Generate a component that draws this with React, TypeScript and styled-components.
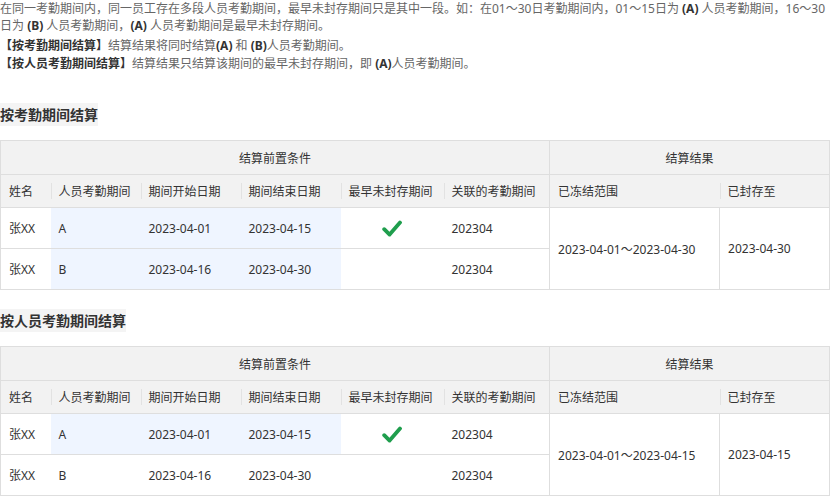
import styled, { createGlobalStyle } from 'styled-components';

const GlobalStyle = createGlobalStyle`
  html, body {
    margin: 0;
    padding: 0;
    overflow: hidden;
    background: #fff;
  }
  body {
    font-family: "Noto Sans", "Noto Sans CJK SC", sans-serif;
    color: #333;
  }
`;

interface Row {
  name: string;
  period: string;
  start: string;
  end: string;
  earliest: boolean;
  linked: string;
  tinted: boolean;
}

interface Section {
  title: string;
  rows: Row[];
  frozen: string;
  sealed: string;
}

const sections: Section[] = [
  {
    title: '按考勤期间结算',
    rows: [
      { name: '张XX', period: 'A', start: '2023-04-01', end: '2023-04-15', earliest: true, linked: '202304', tinted: true },
      { name: '张XX', period: 'B', start: '2023-04-16', end: '2023-04-30', earliest: false, linked: '202304', tinted: true },
    ],
    frozen: '2023-04-01～2023-04-30',
    sealed: '2023-04-30',
  },
  {
    title: '按人员考勤期间结算',
    rows: [
      { name: '张XX', period: 'A', start: '2023-04-01', end: '2023-04-15', earliest: true, linked: '202304', tinted: true },
      { name: '张XX', period: 'B', start: '2023-04-16', end: '2023-04-30', earliest: false, linked: '202304', tinted: false },
    ],
    frozen: '2023-04-01～2023-04-15',
    sealed: '2023-04-15',
  },
];

const colWidths = [50, 90, 100, 100, 103, 106, 170, 110];

const CheckIcon = () => (
  <svg width="20" height="17" viewBox="0 0 20 17">
    <path d="M2.2 9.2 L7.6 14.6 L18 2.6" fill="none" stroke="#1f9e4d" strokeWidth="3.8" strokeLinecap="round" strokeLinejoin="round" />
  </svg>
);

const SettlementTable = ({ section }: { section: Section }) => (
  <Block>
    <Heading>{section.title}</Heading>
    <Table>
      <colgroup>
        {colWidths.map((w, i) => (
          <col key={i} style={{ width: w }} />
        ))}
      </colgroup>
      <thead>
        <tr>
          <GroupCell colSpan={6}>结算前置条件</GroupCell>
          <GroupCell colSpan={2}>结算结果</GroupCell>
        </tr>
        <tr>
          <ColHead>姓名</ColHead>
          <ColHead sep>人员考勤期间</ColHead>
          <ColHead sep>期间开始日期</ColHead>
          <ColHead sep>期间结束日期</ColHead>
          <ColHead sep>最早未封存期间</ColHead>
          <ColHead sep>关联的考勤期间</ColHead>
          <ColHead edge>已冻结范围</ColHead>
          <ColHead sep>已封存至</ColHead>
        </tr>
      </thead>
      <tbody>
        {section.rows.map((r, i) => (
          <tr key={i}>
            <Cell>{r.name}</Cell>
            <Cell tinted={r.tinted}>{r.period}</Cell>
            <Cell tinted={r.tinted}>{r.start}</Cell>
            <Cell tinted={r.tinted}>{r.end}</Cell>
            <CheckCell>{r.earliest && <CheckIcon />}</CheckCell>
            <Cell>{r.linked}</Cell>
            {i === 0 && (
              <>
                <Cell edge rowSpan={section.rows.length}>{section.frozen}</Cell>
                <Cell edge rowSpan={section.rows.length}>{section.sealed}</Cell>
              </>
            )}
          </tr>
        ))}
      </tbody>
    </Table>
  </Block>
);

const App = () => (
  <>
    <GlobalStyle />
    <Page>
      <Intro>
        <Para>
          在同一考勤期间内，同一员工存在多段人员考勤期间，最早未封存期间只是其中一段。如：在01～30日考勤期间内，01～15日为 <Strong>(A)</Strong> 人员考勤期间，16～30日为 <Strong>(B)</Strong> 人员考勤期间，<Strong>(A)</Strong> 人员考勤期间是最早未封存期间。
        </Para>
        <Notes>
          <Note>
            <Strong>【按考勤期间结算】</Strong>结算结果将同时结算<Strong>(A)</Strong> 和 <Strong>(B)</Strong>人员考勤期间。
          </Note>
          <Note>
            <Strong>【按人员考勤期间结算】</Strong>结算结果只结算该期间的最早未封存期间，即 <Strong>(A)</Strong>人员考勤期间。
          </Note>
        </Notes>
      </Intro>
      {sections.map((s) => (
        <SettlementTable key={s.title} section={s} />
      ))}
    </Page>
  </>
);

export default App;

const Page = styled.div`
  display: flex;
  flex-direction: column;
  width: 830px;
`;

const Intro = styled.div`
  font-size: 12px;
  color: #666;
  margin-bottom: 11px;
`;

const Para = styled.p`
  margin: 0;
  line-height: 17px;
`;

const Notes = styled.div`
  margin-top: 3px;
`;

const Note = styled.div`
  line-height: 18px;
`;

const Strong = styled.b`
  font-weight: 700;
  color: #333;
`;

const Block = styled.section`
  display: flex;
  flex-direction: column;
  align-items: flex-start;
  margin-top: 19px;
`;

const Heading = styled.h3`
  margin: 0 0 14px;
  height: 23px;
  line-height: 23px;
  font-size: 14px;
  font-weight: 600;
  color: #333;
  background: #f4f4f4;
`;

const Table = styled.table`
  width: 830px;
  table-layout: fixed;
  border-collapse: collapse;
  font-size: 12px;
  color: #333;
`;

const GroupCell = styled.th`
  height: 33px;
  padding: 0;
  font-weight: 400;
  text-align: center;
  background: #f2f2f2;
  border: 1px solid #dedede;
`;

const ColHead = styled.th<{ sep?: boolean; edge?: boolean }>`
  position: relative;
  height: 32px;
  padding: 0 8px;
  font-weight: 400;
  text-align: left;
  white-space: nowrap;
  background: #f2f2f2;
  border-top: 1px solid #dedede;
  border-bottom: 1px solid #dedede;
  border-left: ${(p) => (p.edge ? '1px solid #dedede' : 'none')};
  border-right: none;

  &:first-child {
    border-left: 1px solid #dedede;
  }

  &:last-child {
    border-right: 1px solid #dedede;
  }

  &::before {
    content: '';
    display: ${(p) => (p.sep ? 'block' : 'none')};
    position: absolute;
    left: 0;
    top: 50%;
    width: 1px;
    height: 16px;
    margin-top: -8px;
    background: #e2e2e2;
  }
`;

const Cell = styled.td<{ tinted?: boolean; edge?: boolean }>`
  height: 40px;
  padding: 0 8px;
  white-space: nowrap;
  background: ${(p) => (p.tinted ? '#eff5ff' : '#fff')};
  border-top: 1px solid #dedede;
  border-bottom: 1px solid #dedede;
  border-left: ${(p) => (p.edge ? '1px solid #dedede' : 'none')};
  border-right: ${(p) => (p.edge ? '1px solid #dedede' : 'none')};

  &:first-child {
    border-left: 1px solid #dedede;
  }
`;

const CheckCell = styled.td`
  height: 40px;
  padding: 0;
  text-align: center;
  vertical-align: middle;
  background: #fff;
  border-top: 1px solid #dedede;
  border-bottom: 1px solid #dedede;

  svg {
    display: block;
    margin: 0 auto;
  }
`;
